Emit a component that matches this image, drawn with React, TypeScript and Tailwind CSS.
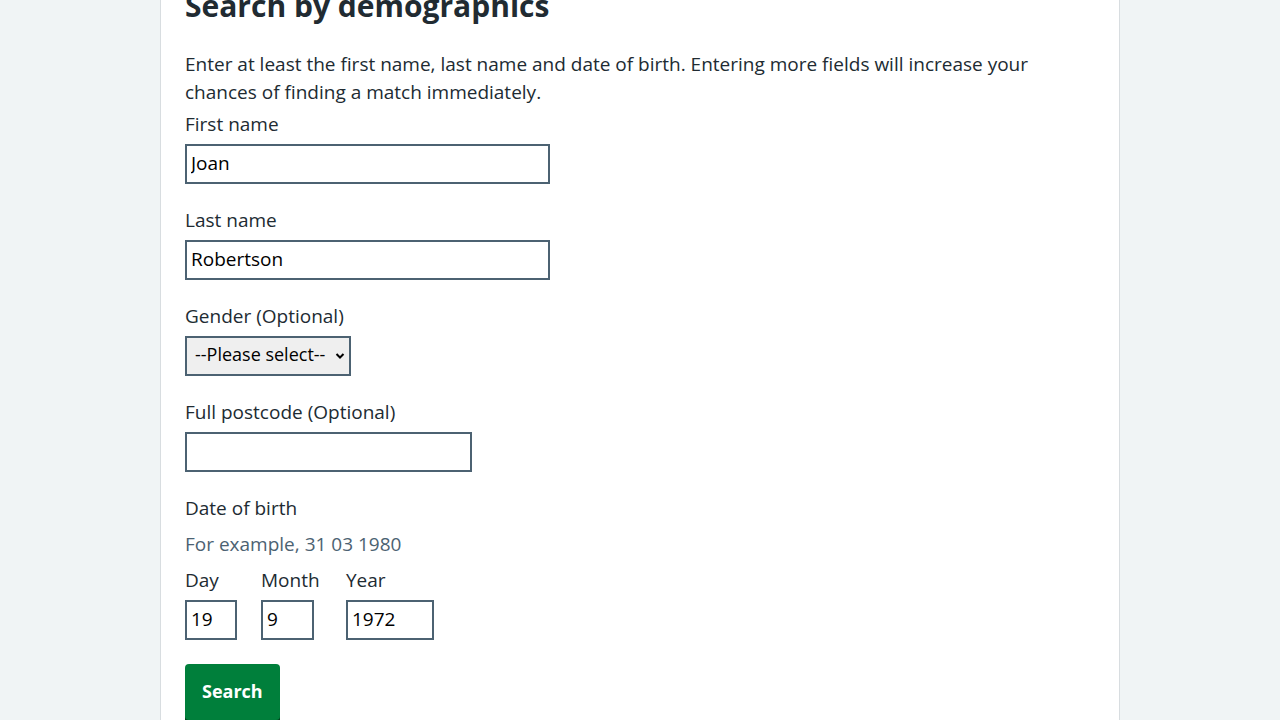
import React from "react";

// ─── Demographics search form ────────────────────────────────────────────────

const font = { fontFamily: '"Open Sans", "Noto Sans", Arial, sans-serif' };

const inputCls =
  "h-10 border-2 border-[#4c6272] bg-white px-[4px] pb-[3px] text-[19px] text-black outline-none";

function Field({ label, value, width }: { label: string; value: string; width: string }) {
  return (
    <div className="mb-6">
      <label className="block text-[19px] leading-6 text-[#212b32] mb-2">{label}</label>
      <input type="text" defaultValue={value} className={`${width} ${inputCls}`} />
    </div>
  );
}

function DateInput({ label, value, width, minW }: { label: string; value: string; width: string; minW: string }) {
  return (
    <div className={`flex flex-col ${minW}`}>
      <label className="block text-[19px] leading-6 text-[#212b32] mb-2">{label}</label>
      <input type="text" defaultValue={value} className={`${width} ${inputCls}`} />
    </div>
  );
}

export default function App() {
  return (
    <div className="min-h-[720px] h-[720px] overflow-hidden bg-[#f0f4f5]" style={font}>
      <div className="mx-auto w-[960px] min-h-[760px] bg-white border-x border-[#d8dde0] px-6 -mt-[14px]">
        <h1 className="text-[30px] leading-10 font-bold text-[#212b32] mb-6">Search by demographics</h1>

        <p className="text-[19px] leading-7 text-[#212b32] mb-[6px] pr-8">
          Enter at least the first name, last name and date of birth. Entering more fields will increase your
          chances of finding a match immediately.
        </p>

        <Field label="First name" value="Joan" width="w-[365px]" />
        <Field label="Last name" value="Robertson" width="w-[365px]" />

        <div className="mb-6">
          <label className="block text-[19px] leading-6 text-[#212b32] mb-2">Gender (Optional)</label>
          <div className="relative w-[166px]">
            <select className="w-[166px] h-10 appearance-none border-2 border-[#4c6272] bg-[#efefef] pl-2 pr-5 pb-[3px] text-[18px] text-black outline-none">
              <option>--Please select--</option>
              <option>Female</option>
              <option>Male</option>
            </select>
            <svg
              className="pointer-events-none absolute right-[6px] top-1/2 -translate-y-1/2"
              width="10"
              height="7"
              viewBox="0 0 10 7"
              fill="none"
            >
              <path d="M1.5 1.5L5 5L8.5 1.5" stroke="#000" strokeWidth="2" />
            </svg>
          </div>
        </div>

        <Field label="Full postcode (Optional)" value="" width="w-[287px]" />

        <div className="mb-6">
          <div className="text-[19px] leading-6 text-[#212b32] mb-3">Date of birth</div>
          <div className="text-[19px] leading-6 text-[#4c6272] mb-3">For example, 31 03 1980</div>
          <div className="flex gap-6">
            <DateInput label="Day" value="19" width="w-[52px]" minW="min-w-[52px]" />
            <DateInput label="Month" value="9" width="w-[53px]" minW="min-w-[61px]" />
            <DateInput label="Year" value="1972" width="w-[88px]" minW="min-w-[88px]" />
          </div>
        </div>

        <button className="bg-[#007f3b] text-white font-bold text-[18px] leading-6 px-[17px] pt-[15px] pb-[17px] rounded-[4px] shadow-[0_4px_0_#00401e]">
          Search
        </button>
      </div>
    </div>
  );
}
